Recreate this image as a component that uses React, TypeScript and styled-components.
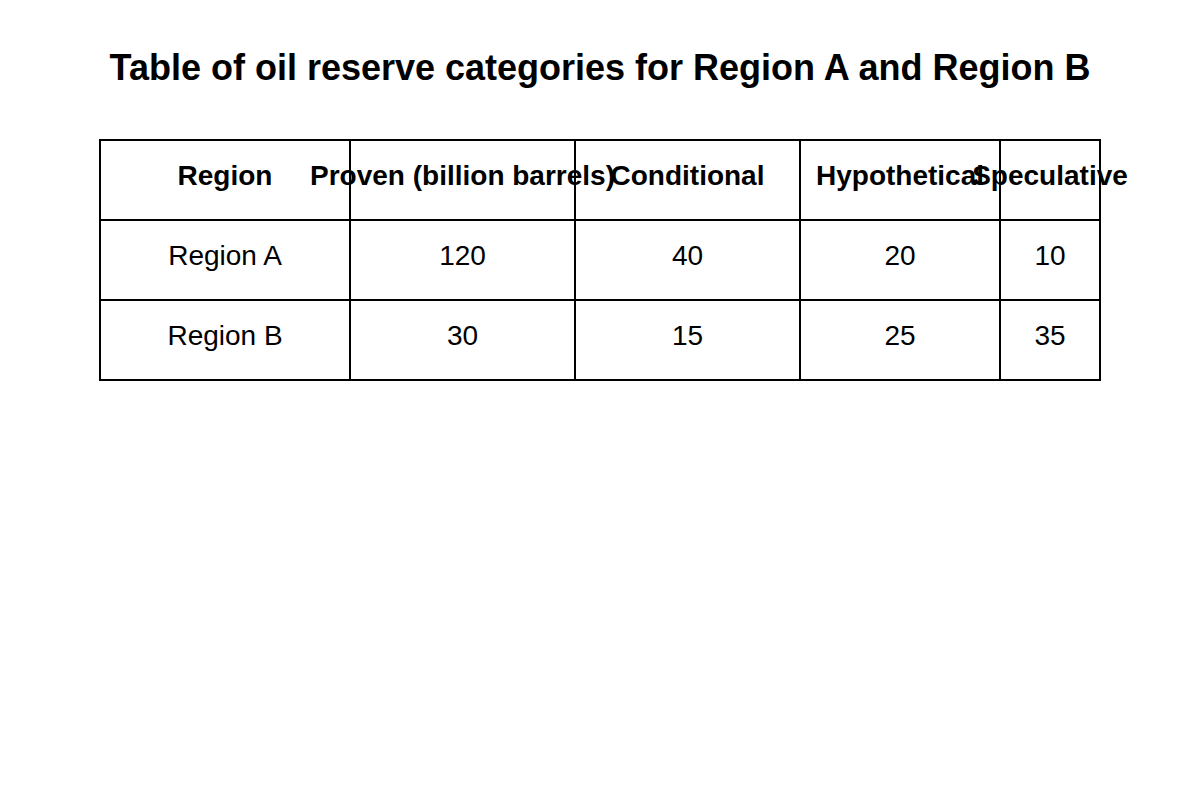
import React from "react";
import styled, { createGlobalStyle } from "styled-components";

const Global = createGlobalStyle`
  html, body { margin: 0; padding: 0; background: #fff; }
  body { font-family: "Liberation Sans", Arial, sans-serif; color: #000; }
`;

const Page = styled.div`
  width: 1200px;
  height: 800px;
  display: flex;
  flex-direction: column;
  align-items: center;
  padding-top: 46px;
  box-sizing: border-box;
`;

const Title = styled.h1`
  margin: 0;
  font-size: 36px;
  line-height: 44px;
  font-weight: 700;
`;

const Grid = styled.div`
  margin-top: 49px;
  display: grid;
  grid-template-columns: 250px 225px 225px 200px 100px;
  grid-auto-rows: 80px;
  border-top: 2px solid #000;
  border-left: 2px solid #000;
`;

const Cell = styled.div<{ $head?: boolean }>`
  display: flex;
  align-items: center;
  justify-content: center;
  white-space: nowrap;
  font-size: 28px;
  font-weight: ${(p) => (p.$head ? 700 : 400)};
  border-right: 2px solid #000;
  border-bottom: 2px solid #000;
  margin-left: -2px;
  margin-top: -2px;
  padding-bottom: 6px;
  padding-left: 2px;
  box-sizing: border-box;
  min-width: 0;
`;

const headers = ["Region", "Proven (billion barrels)", "Conditional", "Hypothetical", "Speculative"];
const rows = [
  ["Region A", "120", "40", "20", "10"],
  ["Region B", "30", "15", "25", "35"],
];

export default function App() {
  return (
    <>
      <Global />
      <Page>
        <Title>Table of oil reserve categories for Region A and Region B</Title>
        <Grid>
          {headers.map((h) => (
            <Cell $head key={h}>{h}</Cell>
          ))}
          {rows.map((r) => r.map((c, i) => <Cell key={r[0] + i}>{c}</Cell>))}
        </Grid>
      </Page>
    </>
  );
}
